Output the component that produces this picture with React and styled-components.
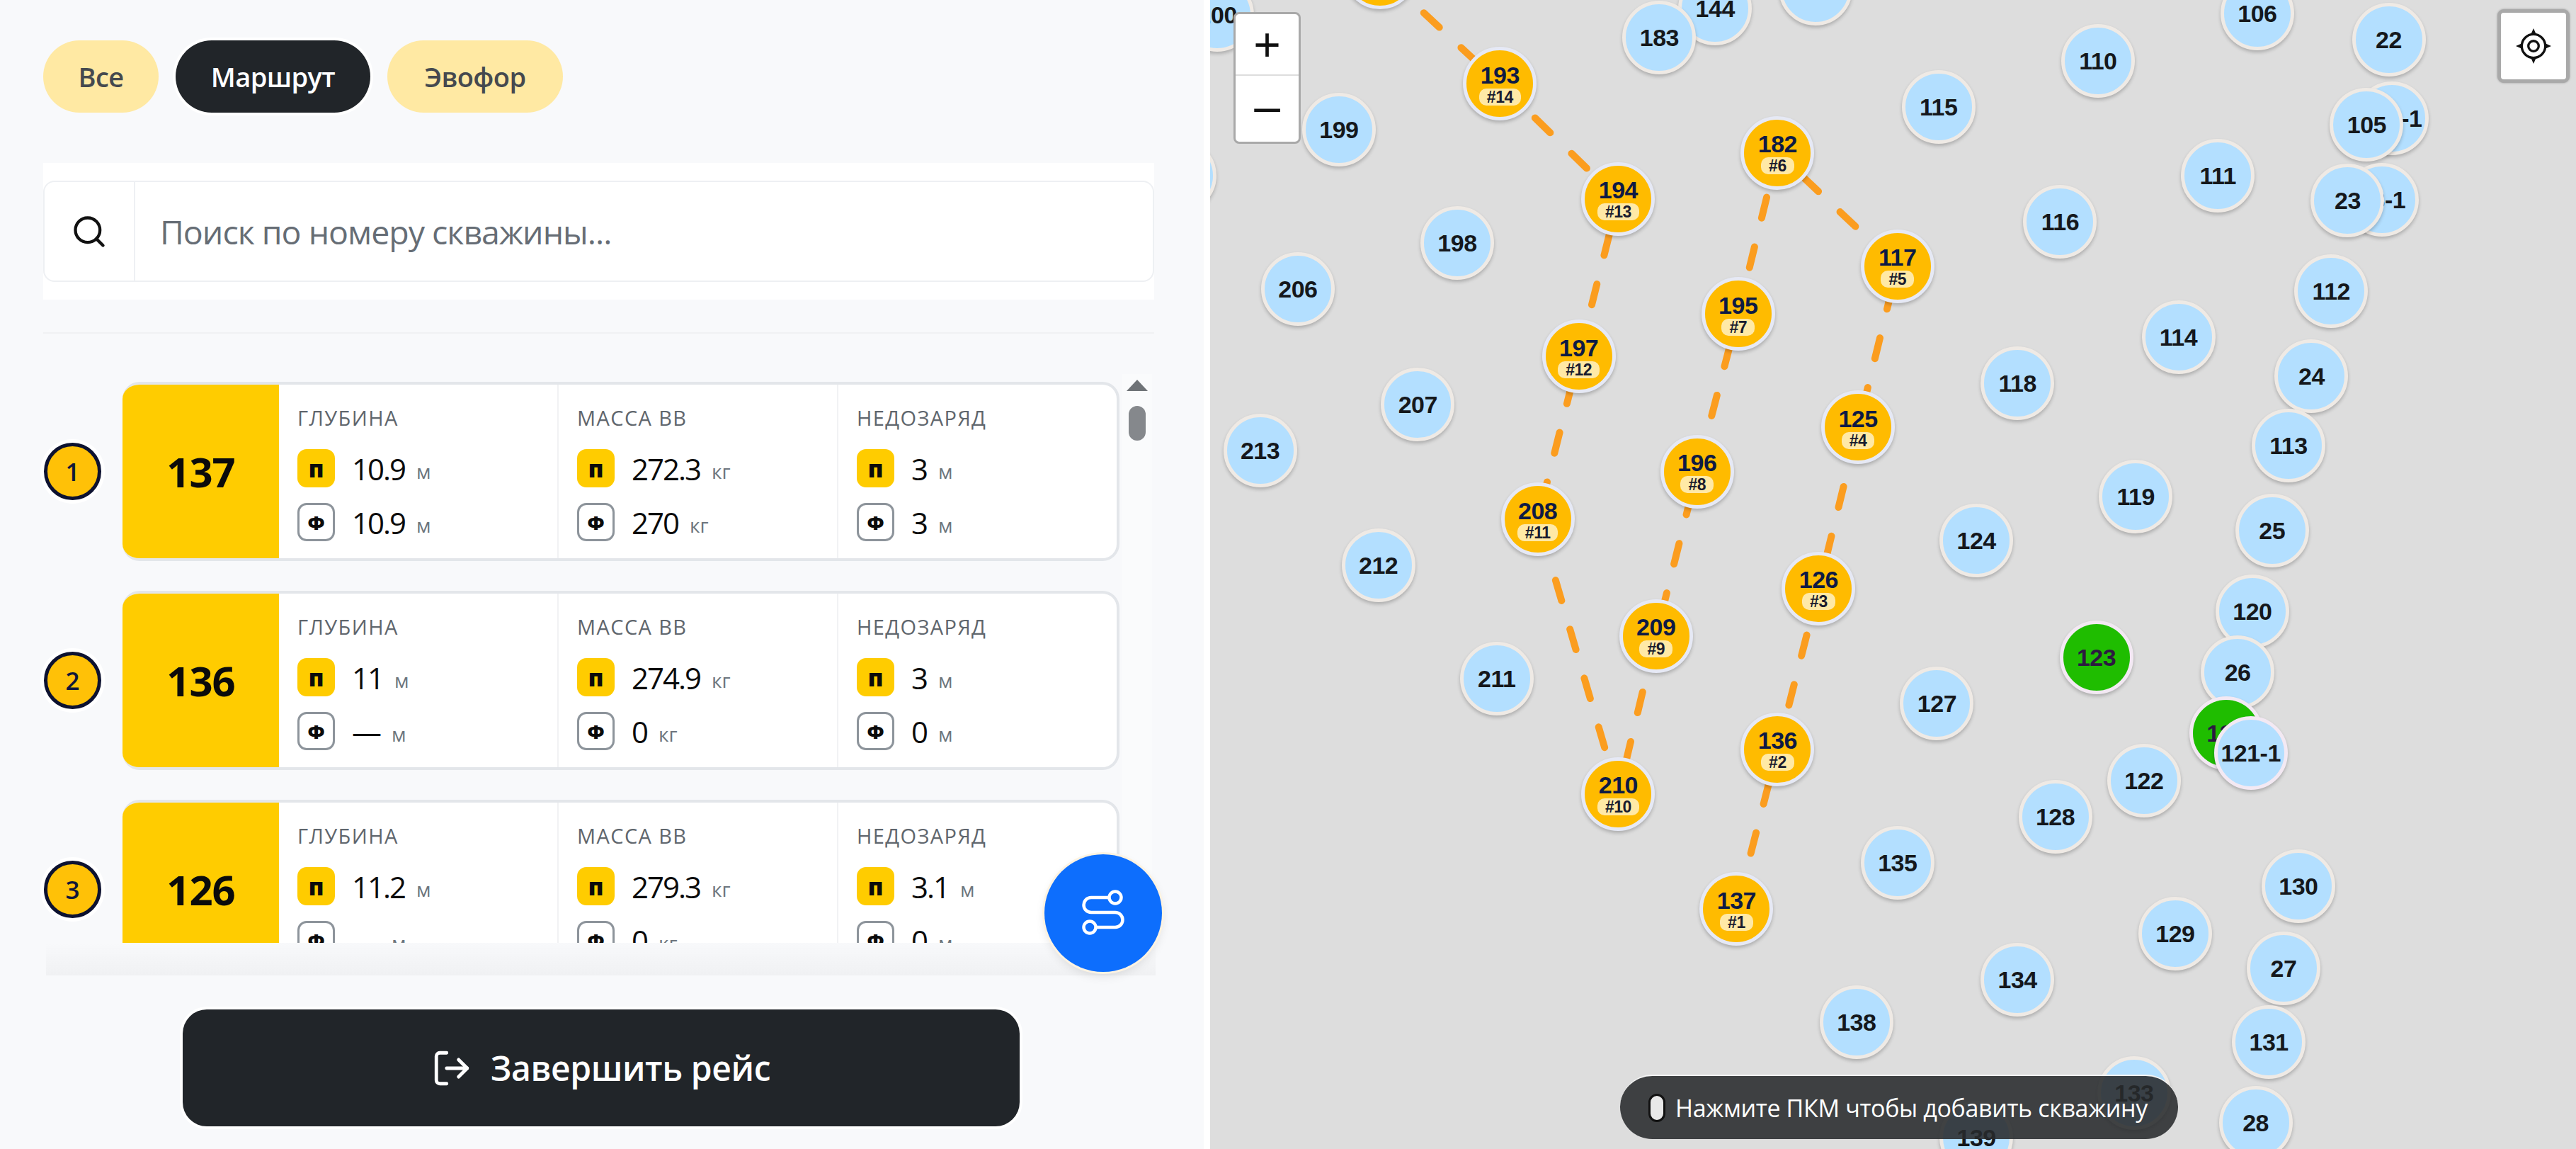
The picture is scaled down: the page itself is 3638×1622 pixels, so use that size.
import React from "react";
import styled, { createGlobalStyle } from "styled-components";
import { Search, LogOut } from "lucide-react";

const GlobalStyle = createGlobalStyle`
  html, body { margin: 0; padding: 0; background: #fff; }
  body { font-family: "Open Sans", "Noto Sans", sans-serif; overflow: hidden; }
  * { box-sizing: border-box; }
`;

const Page = styled.div`display: flex; width: 3638px; height: 1622px; overflow: hidden;`;
const Sidebar = styled.aside`position: relative; width: 1700px; height: 1622px; margin-right: 9px; background: #f8f9fb; display: flex; flex-direction: column; flex: none;`;
const Filters = styled.div`display: flex; gap: 24px; padding: 57px 0 0 61px; height: 158px; flex: none;`;
const Pill = styled.div`
  width: ${(p) => p.$width}px; height: 102px; border-radius: 51px; display: flex; align-items: center; justify-content: center;
  font-size: 38px; font-weight: 600; letter-spacing: -.6px;
  background: ${(p) => (p.$active ? "#212529" : "#ffe9a3")};
  color: ${(p) => (p.$active ? "#fff" : "#45494f")};
  box-shadow: ${(p) => (p.$active ? "0 0 0 4px #fff" : "none")};
`;
const SearchBand = styled.div`margin: 72px 70px 0 61px; height: 193px; padding: 25px 0; background: #fff; flex: none;`;
const SearchBox = styled.div`display: flex; height: 143px; border: 2px solid #eef0f3; border-radius: 16px; background: #fff;`;
const SearchAddon = styled.div`width: 128px; display: flex; align-items: center; justify-content: center; border-right: 2px solid #eef0f3; color: #111;`;
const Placeholder = styled.div`padding-left: 35px; display: flex; align-items: center; font-size: 46.5px; color: #666d75; letter-spacing: -1px;`;
const Rule = styled.div`margin: 46px 70px 0 61px; height: 2px; background: #f0f1f3; flex: none;`;
const List = styled.div`height: 860px; padding: 68px 0 0 62px; display: flex; flex-direction: column; gap: 42px; overflow: hidden; flex: none;`;
const Row = styled.div`display: flex; align-items: center; gap: 30px; flex: none;`;
const Step = styled.div`
  width: 81px; height: 81px; border-radius: 50%; flex: none; display: flex; align-items: center; justify-content: center;
  background: #ffc107; border: 5px solid #0d1230; box-shadow: 0 0 0 5px #fff;
  font-size: 35px; font-weight: 600; color: #12183a;
`;
const Card = styled.div`width: 1408px; height: 253px; display: flex; background: #fff; border: 4px solid #e3e6ea; border-left: 0; border-radius: 24px; overflow: hidden; flex: none;`;
const Stub = styled.div`
  width: 221px; flex: none; background: #ffcc00; display: flex; align-items: center; justify-content: center;
  font-size: 58px; font-weight: 700; color: #0b0b0b; letter-spacing: -1px;
`;
const Metric = styled.div`
  flex: 1; padding: 30px 0 0 26px; display: flex; flex-direction: column;
  & + & { border-left: 2px solid #f1f2f4; }
`;
const MetricTitle = styled.div`font-size: 29px; font-weight: 500; line-height: 34px; color: #5f666d; letter-spacing: 1.4px;`;
const ValueRow = styled.div`display: flex; align-items: center; height: 54px; margin-top: ${(p) => (p.$first ? "27px" : "22px")};`;
const Badge = styled.div`
  width: 53px; height: 54px; border-radius: 13px; flex: none; display: flex; align-items: center; justify-content: center;
  font-weight: 800; color: #0b0b0b; margin-right: 24px;
  font-size: ${(p) => (p.$plan ? "33px" : "27px")};
  background: ${(p) => (p.$plan ? "#ffcc00" : "#fff")};
  border: ${(p) => (p.$plan ? "none" : "3px solid #8d949b")};
`;
const Value = styled.span`font-size: 42px; color: #0b0b0b; letter-spacing: -2px;`;
const Unit = styled.span`font-size: 28px; color: #6c757d; margin-left: 16px; margin-top: 8px;`;
const ScrollTrack = styled.div`position: absolute; left: 1585px; top: 528px; width: 42px; height: 803px; background: #fafbfc;`;
const ScrollArrow = styled.div`position: absolute; left: 6px; top: 8px; width: 0; height: 0; border-left: 15px solid transparent; border-right: 15px solid transparent; border-bottom: 16px solid #6f7377;`;
const ScrollThumb = styled.div`position: absolute; left: 9px; top: 45px; width: 24px; height: 49px; border-radius: 12px; background: #85888c;`;
const Fade = styled.div`margin: 0 68px 0 65px; height: 46px; flex: none; background: linear-gradient(#f8f9fb, #f0f1f3);`;
const Footer = styled.div`margin: 0 68px 0 65px; flex: 1; padding-top: 48px; display: flex; justify-content: center; background: #f8f9fb;`;
const FinishButton = styled.div`
  width: 1182px; height: 165px; border-radius: 34px; background: #212529; color: #fff; display: flex; align-items: center; justify-content: center; gap: 26px;
  font-size: 48px; font-weight: 600; box-shadow: 0 0 0 4px #fff; letter-spacing: -.4px;
`;
const Fab = styled.div`
  position: absolute; left: 1475px; top: 1206px; width: 166px; height: 166px; border-radius: 50%; background: #0d6efd;
  display: flex; align-items: center; justify-content: center; box-shadow: 0 0 0 3px #fdf3e2, 0 6px 14px rgba(0,0,0,.1);
`;

const MapArea = styled.div`position: relative; flex: 1; height: 1622px; background: #dddddd; overflow: hidden;`;
const RouteLine = styled.svg`position: absolute; left: 0; top: 0; width: 100%; height: 100%;`;
const Marker = styled.div`
  position: absolute; width: 104px; height: 104px; margin: -52px 0 0 -52px; border-radius: 50%; display: flex; flex-direction: column; align-items: center; justify-content: center;
  font-family: "Liberation Sans", Arial, sans-serif; font-weight: 700; font-size: 34px; letter-spacing: -.5px; color: #15181c;
  background: ${(p) => p.$color}; border: 5px solid ${(p) => p.$ring}; box-shadow: 0 3px 5px rgba(0,0,0,.22);
`;
const OrderTag = styled.span`font-size: 23px; line-height: 24px; padding: 0 11px; border-radius: 10px; background: #ffe9a6; color: #1a1c2e; margin-top: 1px;`;
const MarkerNum = styled.span`line-height: 36px; color: ${(p) => p.$c || "inherit"};`;
const ZoomControl = styled.div`position: absolute; left: 33px; top: 17px; width: 95px; height: 186px; background: #fff; border: 3px solid #a9a9a9; border-radius: 8px; display: flex; flex-direction: column;`;
const ZoomButton = styled.div`
  flex: 1; display: flex; align-items: center; justify-content: center; font-family: "Liberation Sans", sans-serif; font-size: 66px; color: #111;
  & + & { border-top: 2px solid #ddd; padding-bottom: 8px; }
`;
const LocateButton = styled.div`position: absolute; left: 1818px; top: 13px; width: 102px; height: 104px; background: #fff; border: 5px solid #a9a9a9; border-radius: 9px; display: flex; align-items: center; justify-content: center; box-shadow: 0 0 3px rgba(0,0,0,.3);`;
const Hint = styled.div`
  position: absolute; left: 579px; top: 1517px; width: 788px; height: 91px; border-radius: 46px; background: rgba(40,42,44,.88); border-top: 2px solid #f3f3f3;
  display: flex; align-items: center; gap: 14px; padding-left: 40px; color: #fff; font-size: 34px; font-weight: 500; letter-spacing: -.35px;
`;
const MouseIcon = styled.div`width: 24px; height: 40px; border-radius: 12px; background: #e8e8e8; border: 3px solid #111; flex: none;`;

// map coords are taken from the 1568px wide preview
const S = 3638 / 1568;
const X0 = 1709;
const pos = (x, y) => ({ left: x * S - X0, top: y * S });

const BLUE = [
  ["200", 741, 9], ["144", 1044, 5], ["104", 1105, -7], ["183", 1010, 23], ["106", 1374, 8], ["22", 1454, 24],
  ["199", 815, 79], ["110", 1277, 37], ["115", 1180, 65], ["214", 718, 107], ["105-1", 1456, 72], ["105", 1440.6, 76],
  ["111", 1350, 107], ["23-1", 1450, 121.5], ["23", 1429, 122], ["116", 1254, 135], ["198", 887, 148], ["206", 790, 176],
  ["112", 1419, 177], ["114", 1326, 205], ["118", 1228, 233], ["24", 1407, 229], ["207", 863, 246], ["213", 767, 274],
  ["113", 1393, 271], ["119", 1300, 302], ["25", 1383, 323], ["124", 1203, 329], ["212", 839, 344], ["120", 1371, 372],
  ["26", 1362, 409], ["211", 911, 413], ["127", 1179, 428], ["122", 1305, 475], ["128", 1251, 497], ["135", 1155, 525],
  ["130", 1399, 539], ["129", 1324, 568], ["27", 1390, 589], ["134", 1228, 596], ["138", 1130, 622], ["131", 1381, 634],
  ["133", 1299, 665], ["28", 1373, 683], ["139", 1203, 692],
];
const ROUTE = [
  ["137", 1, 1057, 553], ["136", 2, 1082, 456], ["126", 3, 1107, 358], ["125", 4, 1131, 260], ["117", 5, 1155, 162],
  ["182", 6, 1082, 93], ["195", 7, 1058, 191], ["196", 8, 1033, 287], ["209", 9, 1008, 387], ["210", 10, 985, 483],
  ["208", 11, 936, 316], ["197", 12, 961, 217], ["194", 13, 985, 121], ["193", 14, 913, 51], ["192", 15, 840, -17],
];
const rows = [
  { n: 1, id: "137", d: ["10.9", "10.9"], m: ["272.3", "270"], u: ["3", "3"] },
  { n: 2, id: "136", d: ["11", "—"], m: ["274.9", "0"], u: ["3", "0"] },
  { n: 3, id: "126", d: ["11.2", "—"], m: ["279.3", "0"], u: ["3.1", "0"] },
];

const MetricBlock = ({ title, values, unit }) => (
  <Metric>
    <MetricTitle>{title}</MetricTitle>
    <ValueRow $first><Badge $plan>п</Badge><Value>{values[0]}</Value><Unit>{unit}</Unit></ValueRow>
    <ValueRow><Badge>Ф</Badge><Value>{values[1]}</Value><Unit>{unit}</Unit></ValueRow>
  </Metric>
);

const BlueMarker = ({ label, x, y }) => (
  <Marker style={pos(x, y)} $color="#b3dfff" $ring="#efeae5"><MarkerNum>{label}</MarkerNum></Marker>
);

const App = () => (
  <Page>
    <GlobalStyle />
    <Sidebar>
      <Filters>
        <Pill $width={163}>Все</Pill>
        <Pill $width={275} $active>Маршрут</Pill>
        <Pill $width={248}>Эвофор</Pill>
      </Filters>
      <SearchBand>
        <SearchBox>
          <SearchAddon><Search size={52} strokeWidth={2} /></SearchAddon>
          <Placeholder>Поиск по номеру скважины...</Placeholder>
        </SearchBox>
      </SearchBand>
      <Rule />
      <List>
        {rows.map((r) => (
          <Row key={r.n}>
            <Step>{r.n}</Step>
            <Card>
              <Stub>{r.id}</Stub>
              <MetricBlock title="ГЛУБИНА" values={r.d} unit="м" />
              <MetricBlock title="МАССА ВВ" values={r.m} unit="кг" />
              <MetricBlock title="НЕДОЗАРЯД" values={r.u} unit="м" />
            </Card>
          </Row>
        ))}
      </List>
      <ScrollTrack><ScrollArrow /><ScrollThumb /></ScrollTrack>
      <Fade />
      <Footer>
        <FinishButton><LogOut size={58} strokeWidth={2} />Завершить рейс</FinishButton>
      </Footer>
      <Fab>
        <svg width="64" height="68" viewBox="0 0 64 68" fill="none" stroke="#fff" strokeWidth="4.5" strokeLinecap="round">
          <circle cx="13" cy="54" r="8.5" />
          <path d="M22 54H49a10.5 10.5 0 0 0 0-21H15a10.5 10.5 0 0 1 0-21H40" />
          <circle cx="49" cy="12" r="8.5" />
        </svg>
      </Fab>
    </Sidebar>
    <MapArea>
      {BLUE.map(([label, x, y]) => <BlueMarker key={label} label={label} x={x} y={y} />)}
      <RouteLine>
        <polyline
          points={ROUTE.map((p) => `${p[2] * S - X0},${p[3] * S}`).join(" ")}
          fill="none" stroke="#fb9d1f" strokeWidth="10" strokeLinecap="round" strokeDasharray="30 42" strokeDashoffset="-9"
        />
      </RouteLine>
      <Marker style={pos(1355, 446)} $color="#1fbd00" $ring="#f3e9f3"><MarkerNum $c="#2c1a40">121</MarkerNum></Marker>
      <Marker style={pos(1370, 458)} $color="#b3dfff" $ring="#f3e9f3"><MarkerNum>121-1</MarkerNum></Marker>
      <Marker style={pos(1276, 400)} $color="#1fbd00" $ring="#f3e9f3"><MarkerNum $c="#2c1a40">123</MarkerNum></Marker>
      {ROUTE.map(([label, order, x, y]) => (
        <Marker key={label} style={pos(x, y)} $color="#ffbb00" $ring="#e6e9f5">
          <MarkerNum $c="#0e1a44">{label}</MarkerNum>
          <OrderTag>#{order}</OrderTag>
        </Marker>
      ))}
      <ZoomControl>
        <ZoomButton>+</ZoomButton>
        <ZoomButton>–</ZoomButton>
      </ZoomControl>
      <LocateButton>
        <svg width="50" height="50" viewBox="0 0 48 48" fill="none" stroke="#111" strokeWidth="3.2">
          <circle cx="24" cy="24" r="16" />
          <circle cx="24" cy="24" r="7" />
          <path d="M24 0l3.5 8h-7zM24 48l3.5-8h-7zM0 24l8-3.5v7zM48 24l-8-3.5v7z" fill="#111" stroke="none" />
        </svg>
      </LocateButton>
      <Hint><MouseIcon />Нажмите ПКМ чтобы добавить скважину</Hint>
    </MapArea>
  </Page>
);

export default App;
